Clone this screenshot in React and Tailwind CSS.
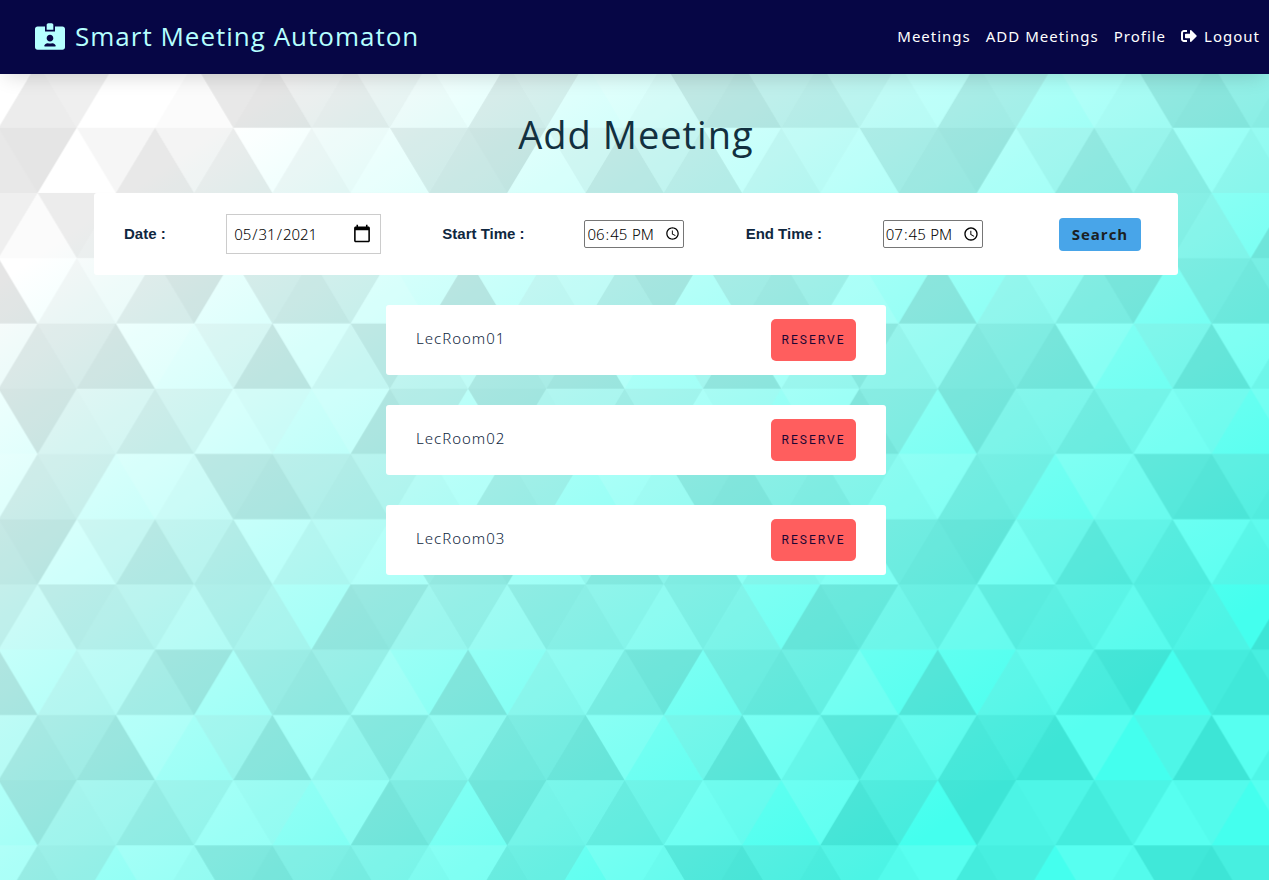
import { FaIdCardAlt, FaSignOutAlt } from "react-icons/fa";

const TRIANGLES = [
  ["#444", "90 150 0 300 180 300"],
  ["#000", "90 150 180 0 0 0"],
  ["#AAA", "270 150 360 0 180 0"],
  ["#DDD", "450 150 360 300 540 300"],
  ["#999", "450 150 540 0 360 0"],
  ["#000", "630 150 540 300 720 300"],
  ["#DDD", "630 150 720 0 540 0"],
  ["#444", "810 150 720 300 900 300"],
  ["#FFF", "810 150 900 0 720 0"],
  ["#DDD", "990 150 900 300 1080 300"],
  ["#444", "990 150 1080 0 900 0"],
  ["#DDD", "90 450 0 600 180 600"],
  ["#000", "90 450 180 300 0 300"],
  ["#666", "270 450 180 600 360 600"],
  ["#AAA", "270 450 360 300 180 300"],
  ["#DDD", "450 450 360 600 540 600"],
  ["#999", "450 450 540 300 360 300"],
  ["#999", "630 450 540 600 720 600"],
  ["#FFF", "630 450 720 300 540 300"],
  ["#000", "810 450 720 600 900 600"],
  ["#DDD", "810 450 900 300 720 300"],
  ["#AAA", "990 450 900 600 1080 600"],
  ["#444", "990 450 1080 300 900 300"],
  ["#222", "90 750 0 900 180 900"],
  ["#000", "270 750 180 900 360 900"],
  ["#DDD", "270 750 360 600 180 600"],
  ["#000", "450 750 540 600 360 600"],
  ["#000", "630 750 540 900 720 900"],
  ["#444", "630 750 720 600 540 600"],
  ["#AAA", "810 750 720 900 900 900"],
  ["#666", "810 750 900 600 720 600"],
  ["#999", "990 750 900 900 1080 900"],
  ["#999", "180 0 90 150 270 150"],
  ["#444", "360 0 270 150 450 150"],
  ["#FFF", "540 0 450 150 630 150"],
  ["#000", "900 0 810 150 990 150"],
  ["#222", "0 300 -90 450 90 450"],
  ["#FFF", "0 300 90 150 -90 150"],
  ["#FFF", "180 300 90 450 270 450"],
  ["#666", "180 300 270 150 90 150"],
  ["#222", "360 300 270 450 450 450"],
  ["#FFF", "360 300 450 150 270 150"],
  ["#444", "540 300 450 450 630 450"],
  ["#222", "540 300 630 150 450 150"],
  ["#AAA", "720 300 630 450 810 450"],
  ["#666", "720 300 810 150 630 150"],
  ["#FFF", "900 300 810 450 990 450"],
  ["#999", "900 300 990 150 810 150"],
  ["#000", "0 600 -90 750 90 750"],
  ["#666", "0 600 90 450 -90 450"],
  ["#AAA", "180 600 90 750 270 750"],
  ["#444", "180 600 270 450 90 450"],
  ["#444", "360 600 270 750 450 750"],
  ["#999", "360 600 450 450 270 450"],
  ["#666", "540 600 630 450 450 450"],
  ["#222", "720 600 630 750 810 750"],
  ["#FFF", "900 600 810 750 990 750"],
  ["#222", "900 600 990 450 810 450"],
  ["#DDD", "0 900 90 750 -90 750"],
  ["#444", "180 900 270 750 90 750"],
  ["#FFF", "360 900 450 750 270 750"],
  ["#AAA", "540 900 630 750 450 750"],
  ["#FFF", "720 900 810 750 630 750"],
  ["#222", "900 900 990 750 810 750"],
  ["#222", "1080 300 990 450 1170 450"],
  ["#FFF", "1080 300 1170 150 990 150"],
  ["#000", "1080 600 990 750 1170 750"],
  ["#666", "1080 600 1170 450 990 450"],
  ["#DDD", "1080 900 1170 750 990 750"],
];

const ROOMS = ["LecRoom01", "LecRoom02", "LecRoom03"];

function Backdrop() {
  return (
    <div
      aria-hidden="true"
      className="absolute inset-0 -z-10 bg-linear-to-br/srgb from-white from-16% to-[#44ffee] to-84%"
    >
      <svg className="h-full w-full">
        <defs>
          <pattern
            id="triangles"
            patternUnits="userSpaceOnUse"
            x="-1.5"
            y="-2.8"
            width="469.6"
            height="391.5"
            viewBox="0 0 1080 900"
            preserveAspectRatio="none"
          >
            <g fillOpacity="0.1">
              {TRIANGLES.map(([fill, points]) => (
                <polygon key={points} fill={fill} points={points} />
              ))}
            </g>
          </pattern>
        </defs>
        <rect width="100%" height="100%" fill="url(#triangles)" />
      </svg>
    </div>
  );
}

function Header() {
  return (
    <header className="flex h-[74px] items-center justify-between bg-[#060645] pr-[9px] pb-[2px] pl-[35px] shadow-[0_8px_20px_-6px_rgba(0,0,0,0.16)]">
      <a href="#home" className="flex items-center gap-[10px] text-[26px] tracking-[1px] text-[#b5ffff]">
        <FaIdCardAlt className="h-[27px] w-[30px]" />
        Smart Meeting Automaton
      </a>
      <nav className="flex items-center gap-[15px] font-['Noto_Sans',sans-serif] text-[15px] tracking-[1px] text-white">
        <a href="#meetings">Meetings</a>
        <a href="#add">ADD Meetings</a>
        <a href="#profile">Profile</a>
        <a href="#logout" className="flex items-center gap-[7px]">
          <FaSignOutAlt className="size-4" />
          Logout
        </a>
      </nav>
    </header>
  );
}

function SearchForm() {
  const label = "font-['Liberation_Sans',sans-serif] text-[15px] font-bold whitespace-nowrap text-[#0f2740]";
  const time =
    "h-7 w-[100px] rounded-[2px] border border-[#767676] bg-white pl-[1px] font-['Noto_Sans',sans-serif] text-[15px] font-light text-black";
  return (
    <form
      onSubmit={(e) => e.preventDefault()}
      className="flex h-[82px] items-center justify-between rounded-[3px] bg-white pr-[37px] pl-[30px]"
    >
      <label htmlFor="date" className={`${label} w-[41px]`}>Date :</label>
      <input
        id="date"
        type="date"
        defaultValue="2021-05-31"
        className="h-10 w-[155px] border border-[#cccccc] bg-white px-[6px] font-['Noto_Sans',sans-serif] text-[15px] font-light text-black [&::-webkit-calendar-picker-indicator]:size-5"
      />
      <label htmlFor="start" className={`${label} w-[81px]`}>Start Time :</label>
      <input id="start" type="time" defaultValue="18:45" className={time} />
      <label htmlFor="end" className={`${label} w-[76px]`}>End Time :</label>
      <input id="end" type="time" defaultValue="19:45" className={time} />
      <button
        type="submit"
        className="ml-[15px] h-[33px] w-[82px] rounded-[4px] bg-[#48a5e9] text-[15px] font-bold tracking-[1px] text-[#1b1f23]"
      >
        Search
      </button>
    </form>
  );
}

export default function App() {
  return (
    <div className="relative isolate min-h-screen font-['Open_Sans',sans-serif]">
      <Backdrop />
      <Header />
      <main className="pr-[91px] pl-[94px]">
        <h1 className="pt-[32px] pb-[31px] text-center text-[38px] leading-[56px] font-normal tracking-[1px] text-[#12303f]">
          Add Meeting
        </h1>
        <SearchForm />
        <ul className="mx-auto mt-[30px] flex max-w-[500px] flex-col gap-[30px]">
          {ROOMS.map((room) => (
            <li key={room} className="flex h-[70px] items-center justify-between rounded-[3px] bg-white px-[30px]">
              <span className="pb-[3px] font-['Noto_Sans',sans-serif] text-[15px] font-light tracking-[1px] text-[#0f2740]">
                {room}
              </span>
              <button
                type="button"
                className="h-[42px] w-[85px] rounded-[5px] bg-[#ff5e5e] font-['Roboto',sans-serif] text-[12px] font-normal tracking-[2px] text-[#1d0633]"
              >
                RESERVE
              </button>
            </li>
          ))}
        </ul>
      </main>
    </div>
  );
}
